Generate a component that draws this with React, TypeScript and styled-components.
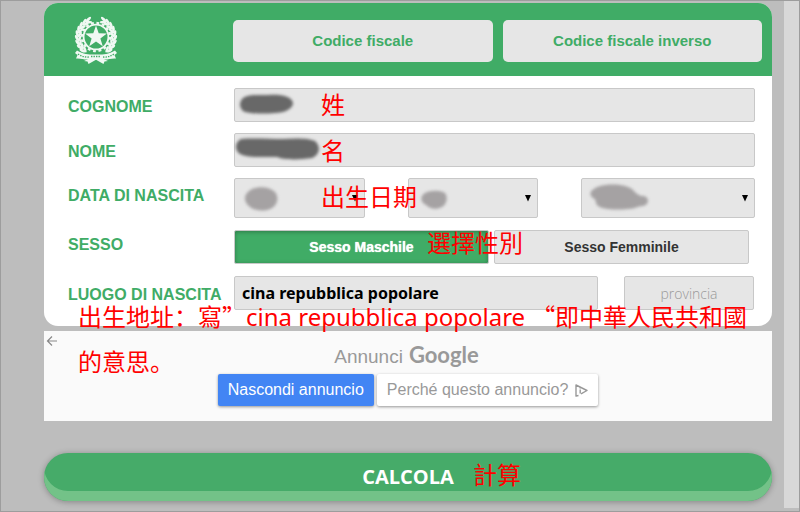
import React from "react";
import styled, { createGlobalStyle, css } from "styled-components";

const GlobalStyle = createGlobalStyle`
  *, *::before, *::after { box-sizing: border-box; }
  html, body { margin: 0; padding: 0; }
  body { font-family: "Liberation Sans", Arial, sans-serif; background: #bdbdbd; }
  button, input, select { font: inherit; margin: 0; }
`;

const humanist = '"Noto Sans", "Open Sans", sans-serif';

const Page = styled.div`
  display: flex;
  min-height: 100vh;
  background: #bdbdbd;
  border: 1px solid #9d9d9d;
`;

const Main = styled.main`
  flex: 1;
  min-width: 0;
  padding: 2px 12px 10px 43px;
`;

const ScrollTrack = styled.div`
  width: 15px;
  margin-bottom: 3px;
  background: #d8d8d8;
`;

const Card = styled.section`
  border-radius: 14px;
  background: #fff;
`;

const Header = styled.header`
  display: grid;
  grid-template-columns: 179px 1fr;
  align-items: center;
  padding: 17px 10px 14px;
  border-radius: 14px 14px 0 0;
  background: #40ac66;
`;

const EmblemBox = styled.div`
  display: flex;
  margin: -8px 0 -3px;
  padding-left: 20px;
`;

const Tabs = styled.nav`
  display: grid;
  grid-template-columns: 1fr 1fr;
  gap: 10px;
`;

const Tab = styled.button`
  height: 42px;
  padding: 0 0 2px;
  border: 0;
  border-radius: 5px;
  background: #e6e6e6;
  color: #40ac66;
  font-size: 15px;
  font-weight: 700;
`;

const Form = styled.form`
  display: flex;
  flex-direction: column;
  gap: 12px;
  padding: 12px 17px 16px 24px;
`;

const NameRows = styled.div`
  display: flex;
  flex-direction: column;
  gap: 11px;
`;

const Row = styled.div`
  position: relative;
  display: grid;
  grid-template-columns: 166px 1fr;
  align-items: center;
`;

const Caption = styled.label<{ $raised?: boolean }>`
  padding: ${(p) => (p.$raised ? "0 0 4px" : "3px 0 0")};
  color: #40ac66;
  font-size: 16px;
  line-height: 20px;
  font-weight: 700;
  white-space: nowrap;
`;

const fieldLook = css`
  width: 100%;
  height: 34px;
  border: 1px solid #c8c8c8;
  border-radius: 2px;
  background: #e6e6e6;
`;

const TextField = styled.input`
  ${fieldLook}
  padding: 0 7px;
  color: #000;
  font-family: ${humanist};
  font-size: 16px;
  font-weight: 700;
`;

const ProvinceField = styled(TextField)`
  font-family: "Open Sans", sans-serif;
  font-size: 14px;
  font-weight: 300;
  text-align: center;
  &::placeholder { color: #999; opacity: 1; }
`;

const DateFields = styled.div`
  display: grid;
  grid-template-columns: 3fr 3fr 4fr;
  gap: 43px;
`;

const SelectBox = styled.div`
  position: relative;
`;

const Select = styled.select`
  ${fieldLook}
  display: block;
  height: 40px;
  appearance: none;
`;

const Arrow = styled.svg`
  position: absolute;
  right: 6px;
  top: 17px;
  pointer-events: none;
`;

const SexFields = styled.div`
  display: grid;
  grid-template-columns: 1fr 1fr;
  gap: 5px;
  padding-right: 6px;
`;

const SexOption = styled.label<{ $on?: boolean }>`
  ${fieldLook}
  display: flex;
  align-items: center;
  justify-content: center;
  font-size: 14px;
  font-weight: 700;
  color: #333;
  ${(p) =>
    p.$on &&
    css`
      background: #40ac66;
      color: #fff;
      text-shadow: 0 0 1px #fff;
      box-shadow: inset 0 1px 4px rgba(0, 0, 0, 0.3);
    `}
`;

const HiddenRadio = styled.input`
  position: absolute;
  opacity: 0;
  pointer-events: none;
`;

const PlaceFields = styled.div`
  display: grid;
  grid-template-columns: 1fr 130px;
  gap: 26px;
  padding-right: 1px;
`;

const Note = styled.p<{ $left: number; $top: number }>`
  position: absolute;
  z-index: 2;
  left: ${(p) => p.$left}px;
  top: ${(p) => p.$top}px;
  margin: 0;
  color: #f00;
  font-family: "Noto Sans CJK SC", sans-serif;
  font-size: 24px;
  line-height: 32px;
  white-space: nowrap;
  pointer-events: none;
`;

const AddressNote = styled(Note)`
  line-height: 44px;
`;

const Latin = styled.span`
  padding-right: 6px;
  font-family: ${humanist};
`;

const Smudge = styled.svg<{ $left: number; $top: number }>`
  position: absolute;
  left: ${(p) => p.$left}px;
  top: ${(p) => p.$top}px;
  overflow: visible;
  pointer-events: none;
  path { filter: blur(1.5px); }
`;

const Ad = styled.aside`
  position: relative;
  display: flex;
  flex-direction: column;
  align-items: center;
  margin-top: 5px;
  padding: 10px 0 15px;
  background: #fafafa;
`;

const BackButton = styled.button`
  position: absolute;
  left: 2px;
  top: 4px;
  display: flex;
  padding: 0;
  border: 0;
  background: none;
`;

const AdTitle = styled.div`
  display: flex;
  align-items: baseline;
  gap: 6px;
  height: 33px;
  padding-right: 3px;
  color: #999;
  font-size: 19px;
  line-height: 28px;
`;

const Brand = styled.span`
  font-family: Lato, sans-serif;
  font-size: 22px;
  font-weight: 700;
`;

const AdActions = styled.div`
  display: flex;
  gap: 3px;
`;

const AdButton = styled.button<{ $primary?: boolean }>`
  display: flex;
  align-items: center;
  gap: 7px;
  height: 32px;
  padding: 0 10px;
  border: 0;
  border-radius: 2px;
  background: ${(p) => (p.$primary ? "#4285f4" : "#fff")};
  color: ${(p) => (p.$primary ? "#fff" : "#999")};
  box-shadow: 0 1px 3px rgba(0, 0, 0, 0.4);
  font-size: 16px;
  white-space: nowrap;
`;

const Submit = styled.button`
  position: relative;
  display: block;
  width: 100%;
  height: 48px;
  margin-top: 32px;
  padding: 0 0 2px;
  border: 0;
  border-radius: 24px;
  background: #46ab69;
  box-shadow: inset 0 -10px 0 #73c288, 0 1px 6px rgba(0, 0, 0, 0.3);
  color: #fff;
  font-family: "Open Sans", sans-serif;
  font-size: 20px;
  font-weight: 700;
`;

const SubmitNote = styled(Note).attrs({ as: "span" })`
  left: calc(50% + 65px);
  font-weight: 400;
`;

const starPoints = Array.from({ length: 10 }, (_, i) => {
  const r = i % 2 ? 4.6 : 11.5;
  const t = (i * 36 - 90) * (Math.PI / 180);
  return `${21 + r * Math.cos(t)},${22 + r * Math.sin(t)}`;
}).join(" ");

function Branch() {
  return (
    <g>
      {[48, 34, 20, 6, -8, -22, -36, -50, -64].map((a) => (
        <g key={a} transform={`rotate(${a} 21 22)`}>
          <ellipse cx="37.6" cy="22" rx="1.3" ry="3.4" transform="rotate(-28 37.6 22)" />
          <ellipse cx="40.2" cy="21" rx="1.4" ry="3.2" transform="rotate(18 40.2 21)" />
        </g>
      ))}
      <path d="M21 39.5 C26 39.5 32 40 40 35.5 L42 38 L39.5 40 L41 43.5 C36 43 33 45 28 44.5 L21 43Z" />
      <path d="M17 42.5 L22 41 L33 46 L29.5 46.5 L28.5 49Z" />
    </g>
  );
}

function Emblem() {
  return (
    <svg width="44" height="50" viewBox="-1 -1 44 50" fill="#fff" opacity="0.92" role="img" aria-label="Repubblica Italiana">
      <circle cx="21" cy="22" r="12.4" fill="none" stroke="#fff" strokeWidth="1.8" />
      <circle cx="21" cy="22" r="14" fill="none" stroke="#fff" strokeWidth="2.4" strokeDasharray="2.8 2.7" />
      <polygon points={starPoints} />
      <Branch />
      <g transform="translate(42 0) scale(-1 1)">
        <Branch />
      </g>
      <path
        d="M3 39 Q8 42.5 14 42 M16 41.5 H26 M28 42 Q34 42.5 39 39"
        fill="none"
        stroke="#40ac66"
        strokeWidth="1.3"
        strokeDasharray="1.4 1.1"
      />
    </svg>
  );
}

function DateSelect({ id, label, children }: { id: string; label: string; children?: React.ReactNode }) {
  return (
    <SelectBox>
      <Select id={id} aria-label={label} defaultValue="">
        <option value=""></option>
      </Select>
      <Arrow width="8" height="7" viewBox="0 0 8 7" aria-hidden="true">
        <path d="M1 0H7L4 6.5Z" />
      </Arrow>
      {children}
    </SelectBox>
  );
}

export default function App() {
  const [sex, setSex] = React.useState("M");
  return (
    <>
      <GlobalStyle />
      <Page>
        <Main>
          <Card>
            <Header>
              <EmblemBox>
                <Emblem />
              </EmblemBox>
              <Tabs>
                <Tab type="button">Codice fiscale</Tab>
                <Tab type="button">Codice fiscale inverso</Tab>
              </Tabs>
            </Header>
            <Form id="dati" onSubmit={(e) => e.preventDefault()}>
              <NameRows>
                <Row>
                  <Caption htmlFor="cognome">COGNOME</Caption>
                  <TextField id="cognome" />
                  <Smudge $left={172} $top={6} width="54" height="22" fill="#686868" aria-hidden="true">
                    <path d="M3 4 C8 0 18 1 28 1 C40 0 52 2 53 9 C53 15 44 19 35 19 C24 20 8 20 3 17 C-1 13 -1 8 3 4Z" />
                  </Smudge>
                  <Note $left={253} $top={0}>姓</Note>
                </Row>
                <Row>
                  <Caption htmlFor="nome">NOME</Caption>
                  <TextField id="nome" />
                  <Smudge $left={167} $top={5} width="86" height="24" fill="#686868" aria-hidden="true">
                    <path d="M6 1 C18 0 34 1 48 1 C60 0 74 0 80 3 C86 8 85 17 77 20 C64 22 48 22 42 19 C28 19 12 20 5 16 C-1 12 0 4 6 1Z" />
                  </Smudge>
                  <Note $left={253} $top={1}>名</Note>
                </Row>
                <Row>
                  <Caption $raised htmlFor="giorno">DATA DI NASCITA</Caption>
                  <DateFields>
                    <DateSelect id="giorno" label="Giorno">
                      <Smudge $left={10} $top={8} width="34" height="26" fill="#a5a2a3" aria-hidden="true">
                        <path d="M8 3 C16 0 26 1 31 6 C35 11 34 18 28 22 C21 26 11 25 6 21 C-1 16 -1 8 8 3Z" />
                      </Smudge>
                    </DateSelect>
                    <DateSelect id="mese" label="Mese">
                      <Smudge $left={13} $top={12} width="26" height="20" fill="#a5a2a3" aria-hidden="true">
                        <path d="M4 3 C10 0 19 0 24 3 C27 7 26 14 21 17 C15 20 9 19 5 15 C-1 12 -1 6 4 3Z" />
                      </Smudge>
                    </DateSelect>
                    <DateSelect id="anno" label="Anno">
                      <Smudge $left={9} $top={6} width="58" height="26" fill="#a5a2a3" aria-hidden="true">
                        <path d="M4 5 C12 -1 35 -1 43 6 C47 10 49 12 54 12 C60 14 59 21 53 22 C47 22 46 25 38 25 C26 26 12 26 7 21 C5 18 7 16 3 14 C-1 11 0 7 4 5Z" />
                      </Smudge>
                    </DateSelect>
                  </DateFields>
                  <Note $left={253} $top={2}>出生日期</Note>
                </Row>
              </NameRows>
              <Row role="radiogroup" aria-labelledby="sesso">
                <Caption as="span" $raised id="sesso">SESSO</Caption>
                <SexFields>
                  <SexOption $on={sex === "M"}>
                    <HiddenRadio type="radio" name="sesso" checked={sex === "M"} onChange={() => setSex("M")} />
                    Sesso Maschile
                  </SexOption>
                  <SexOption $on={sex === "F"}>
                    <HiddenRadio type="radio" name="sesso" checked={sex === "F"} onChange={() => setSex("F")} />
                    Sesso Femminile
                  </SexOption>
                </SexFields>
                <Note $left={359} $top={-4}>選擇性別</Note>
              </Row>
              <Row>
                <Caption htmlFor="luogo">LUOGO DI NASCITA</Caption>
                <PlaceFields>
                  <TextField id="luogo" defaultValue="cina repubblica popolare" />
                  <ProvinceField aria-label="Provincia" placeholder="provincia" />
                </PlaceFields>
                <AddressNote $left={10} $top={18}>
                  出生地址：寫”<Latin>cina repubblica popolare</Latin>“即中華人民共和國
                  <br />
                  的意思。
                </AddressNote>
              </Row>
            </Form>
          </Card>
          <Ad>
            <BackButton type="button" aria-label="Indietro">
              <svg width="12" height="12" viewBox="0 0 12 12" fill="none" stroke="#888" strokeWidth="1.2">
                <path d="M11 6H1.5M6 1.5L1.5 6L6 10.5" />
              </svg>
            </BackButton>
            <AdTitle>
              <span>Annunci</span>
              <Brand>Google</Brand>
            </AdTitle>
            <AdActions>
              <AdButton type="button" $primary>Nascondi annuncio</AdButton>
              <AdButton type="button">
                Perché questo annuncio?
                <svg width="13" height="13" viewBox="0 0 13 13" fill="none" stroke="#999" strokeWidth="1.4" strokeLinejoin="round" aria-hidden="true">
                  <path d="M3.5 11.5L1 12V1L12 6.5L6 9.8M5.2 5.5V9.5M5.2 3.4V4.6" />
                </svg>
              </AdButton>
            </AdActions>
          </Ad>
          <Submit type="submit" form="dati">
            CALCOLA
            <SubmitNote $left={0} $top={5}>計算</SubmitNote>
          </Submit>
        </Main>
        <ScrollTrack />
      </Page>
    </>
  );
}
